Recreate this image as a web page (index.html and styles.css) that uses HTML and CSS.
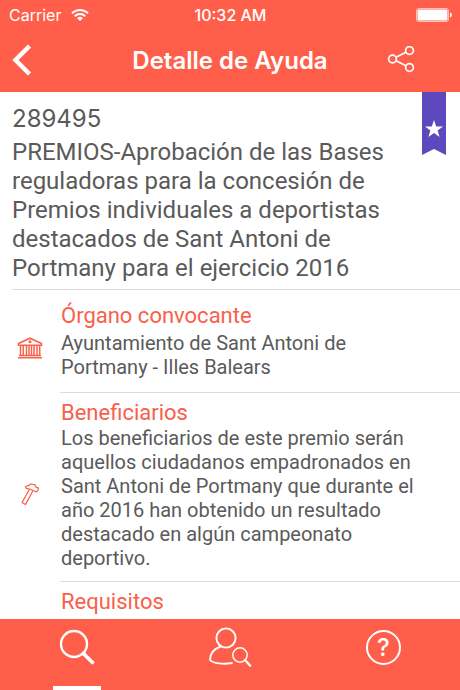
FILE: index.html
```
<!DOCTYPE html>
<html lang="es">
<head>
  <meta charset="UTF-8">
  <meta name="viewport" content="width=device-width, initial-scale=1.0">
  <title>Detalle de Ayuda</title>
  <link rel="stylesheet" href="styles.css">
</head>
<body>
  <header>
    <div class="status-bar">
      <div class="carrier">
        <span>Carrier</span>
        <svg width="18" height="14" viewBox="0 0 18 14" fill="none" stroke="#fff" stroke-width="2">
          <path d="M1 5.2a11.5 11.5 0 0 1 16 0"/>
          <path d="M3.8 8.2a7.5 7.5 0 0 1 10.4 0"/>
          <path d="M9 13L6 10.2a4.4 4.4 0 0 1 6 0z" fill="#fff" stroke="none"/>
        </svg>
      </div>
      <span class="time">10:32 AM</span>
      <div class="battery">
        <svg width="36" height="14" viewBox="0 0 36 14">
          <rect x=".5" y=".5" width="32" height="13" rx="2" fill="none" stroke="#ffc0b5"/>
          <rect x="1.500" y="1.500" width="30" height="11" rx="1" fill="#fff"/>
          <path d="M34 4.5q2 .7 2 2.500t-2 2.500z" fill="#fff"/>
        </svg>
      </div>
    </div>
    <div class="nav-bar">
      <button type="button" class="nav-btn back" aria-label="Volver">
        <svg width="20" height="32" viewBox="0 0 20 32" fill="none" stroke="#fff" stroke-width="4.500">
          <path d="M17.500 2L3.500 16l14 14"/>
        </svg>
      </button>
      <h1>Detalle de Ayuda</h1>
      <button type="button" class="nav-btn share" aria-label="Compartir">
        <svg width="28" height="28" viewBox="0 0 28 28" fill="none" stroke="#fff" stroke-width="1.700">
          <circle cx="5.500" cy="13" r="3.900"/>
          <circle cx="22.500" cy="4.500" r="3.900"/>
          <circle cx="22.500" cy="21.500" r="3.900"/>
          <path d="M9 11.300l10-5M9 14.700l10 5"/>
        </svg>
      </button>
    </div>
  </header>

  <main>
    <section class="summary">
      <svg class="bookmark" width="24" height="63" viewBox="0 0 24 63">
        <path d="M0 0h24v63l-12-6-12 6z" fill="#5d49bd"/>
        <path d="M12 28l2.200 6.400H21l-5.400 4.100 2 6.500-5.600-3.900L6.400 45l2-6.500L3 34.400h6.800z" fill="#fff"/>
      </svg>
      <p class="code">289495</p>
      <h2>PREMIOS-Aprobación de las Bases reguladoras para la concesión de Premios individuales a deportistas destacados de Sant Antoni de Portmany para el ejercicio 2016</h2>
    </section>

    <section class="row convener">
      <div class="row-icon">
        <svg width="26" height="22" viewBox="0 0 26 22" fill="none" stroke="#f9604b" stroke-width="1.500">
          <path d="M1.500 6.500L13 1.200l11.500 5.300v1.800h-23z"/>
          <path d="M3.500 8.500v10M6.200 8.500v10M9.500 8.500v10M12 8.500v10M14.500 8.500v10M17 8.500v10M20 8.500v10M22.700 8.500v10"/>
          <path d="M2 18.500h22M1 20.700h24"/>
          <circle cx="13" cy="4.800" r=".8"/>
        </svg>
      </div>
      <div class="row-text">
        <h3>Órgano convocante</h3>
        <p>Ayuntamiento de Sant Antoni de Portmany - Illes Balears</p>
      </div>
    </section>

    <section class="row">
      <div class="row-icon">
        <svg width="20" height="24" viewBox="0 0 20 24" fill="none" stroke="#f9604b" stroke-width="1.200" stroke-linejoin="round">
          <path d="M9.600 7L2 20.600l3.500 2L12.800 9"/>
          <path d="M5.500 4.500l3-.8L10.500 2l4.500.8.9 2.300 2.600 1-.8 2.400-1.500 1.500-2.400-1.200-4.200-1.800-3.300-.6z"/>
        </svg>
      </div>
      <div class="row-text">
        <h3>Beneficiarios</h3>
        <p>Los beneficiarios de este premio serán aquellos ciudadanos empadronados en Sant Antoni de Portmany que durante el año 2016 han obtenido un resultado destacado en algún campeonato deportivo.</p>
      </div>
    </section>

    <section class="row">
      <div class="row-icon"></div>
      <div class="row-text">
        <h3>Requisitos</h3>
        <p>Para poder optar a premio de la</p>
      </div>
    </section>
  </main>

  <nav class="tab-bar">
    <button type="button" class="tab active" aria-label="Buscar">
      <svg width="38" height="38" viewBox="0 0 38 38" fill="none" stroke="#fff">
        <circle cx="16" cy="15" r="13" stroke-width="2.400"/>
        <path d="M25.500 24.500l9 9" stroke-width="3.800" stroke-linecap="round"/>
      </svg>
    </button>
    <button type="button" class="tab" aria-label="Buscar beneficiarios">
      <svg width="44" height="42" viewBox="0 0 44 42" fill="none" stroke="#fff" stroke-width="1.900" stroke-linecap="round">
        <circle cx="18" cy="11" r="9.600"/>
        <path d="M12.500 19.500C6 22 2 27 2 33c3 3.500 13 4.500 22 3"/>
        <circle cx="32" cy="28" r="7.200" stroke-width="1.500"/>
        <path d="M37.200 33.200l5 5.500" stroke-width="2.300"/>
      </svg>
    </button>
    <button type="button" class="tab" aria-label="Ayuda">
      <span class="help">?</span>
    </button>
  </nav>
</body>
</html>
```

FILE: styles.css
```
* {
  box-sizing: border-box;
}
body {
  display: flex;
  flex-direction: column;
  height: 100vh;
  margin: 0;
  font-family: Inter, "Liberation Sans", sans-serif;
  background-color: white;
  color: #5a5a5a;
}
h1, h2, h3, p {
  margin: 0;
  font-weight: 400;
}
button {
  padding: 0;
  border: none;
  background: none;
  color: white;
  font-family: inherit;
  cursor: pointer;
}
svg {
  display: block;
}
header {
  background-color: #ff5f4a;
  color: white;
}
.status-bar {
  display: grid;
  grid-template-columns: 1fr auto 1fr;
  align-items: center;
  height: 30px;
  padding: 0 8px 0 9px;
  font-size: 16px;
}
.carrier {
  display: flex;
  align-items: center;
  gap: 10px;
}
.time {
  font-weight: 500;
}
.battery {
  justify-self: end;
}
.nav-bar {
  display: grid;
  grid-template-columns: 80px 1fr 80px;
  align-items: center;
  height: 62px;
  padding-bottom: 2px;
}
.nav-btn {
  display: flex;
}
.back {
  padding-left: 12px;
}
.share {
  padding-left: 7px;
}
h1 {
  text-align: center;
  font-size: 24px;
  font-weight: 600;
}
main {
  flex: 1;
  min-height: 0;
  overflow: hidden;
  font-family: Roboto, "Liberation Sans", sans-serif;
}
.summary {
  position: relative;
  margin-left: 12px;
  padding: 12px 64px 6px 0;
  border-bottom: 1px solid #dcdcdc;
}
.bookmark {
  position: absolute;
  top: 0;
  right: 14px;
}
.code, h2 {
  font-size: 24px;
  line-height: 29px;
}
.code {
  margin-bottom: 5px;
  font-family: Inter, "Liberation Sans", sans-serif;
}
.row {
  display: flex;
}
.row-icon {
  display: flex;
  align-items: center;
  justify-content: center;
  width: 60px;
  padding-top: 13px;
}
.row-text {
  flex: 1;
  padding: 7px 32px 11px 1px;
  border-bottom: 1px solid #dcdcdc;
}
.convener .row-text {
  padding-top: 13px;
  padding-bottom: 13px;
}
.convener h3 {
  margin-bottom: 2px;
}
h3 {
  color: #f9604b;
  font-size: 22px;
  line-height: 26px;
}
.row-text p {
  font-size: 20px;
  line-height: 24px;
}
.tab-bar {
  display: grid;
  grid-template-columns: repeat(3, 1fr);
  height: 71px;
  background-color: #ff5f4a;
}
.tab {
  display: flex;
  flex-direction: column;
  align-items: center;
  justify-content: center;
  padding-bottom: 14px;
}
.active {
  position: relative;
}
.active::after {
  content: "";
  position: absolute;
  bottom: 0;
  width: 48px;
  height: 4px;
  background-color: white;
}
.help {
  width: 35px;
  height: 35px;
  border: 2px solid white;
  border-radius: 50%;
  font-size: 24px;
  font-weight: 500;
  line-height: 31px;
}
```
